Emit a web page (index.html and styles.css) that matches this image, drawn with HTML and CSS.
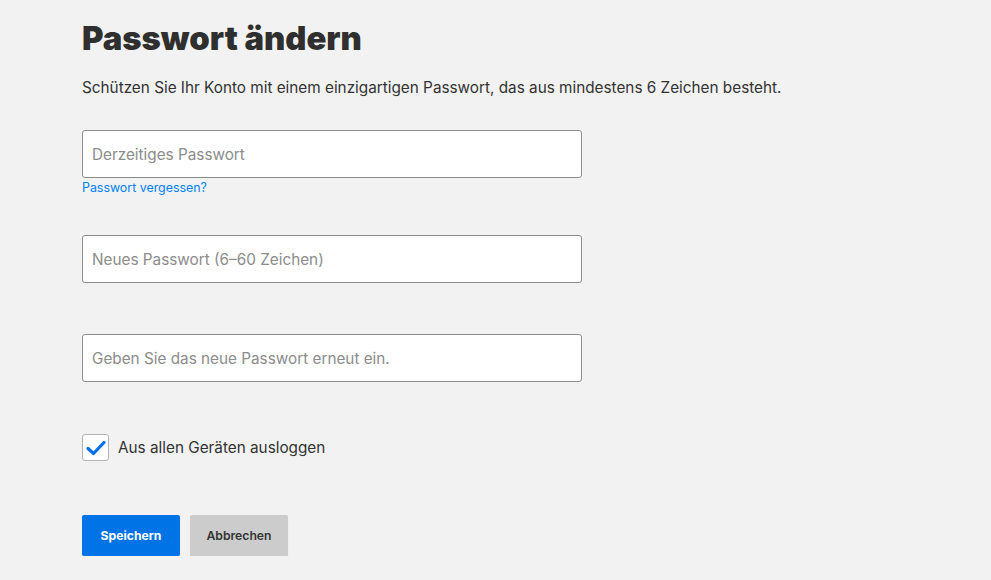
FILE: index.html
```html
<!DOCTYPE html>
<html lang="de">
<head>
<meta charset="utf-8">
<link rel="stylesheet" href="styles.css">
</head>
<body>
<main class="page">
  <h1 class="title">Passwort ändern</h1>
  <p class="lead">Schützen Sie Ihr Konto mit einem einzigartigen Passwort, das aus mindestens 6 Zeichen besteht.</p>
  <form class="form">
    <div class="field first">
      <input class="input" type="password" placeholder="Derzeitiges Passwort">
      <a class="forgot" href="#">Passwort vergessen?</a>
    </div>
    <div class="field second">
      <input class="input" type="password" placeholder="Neues Passwort (6–60 Zeichen)">
    </div>
    <div class="field third">
      <input class="input" type="password" placeholder="Geben Sie das neue Passwort erneut ein.">
    </div>
    <label class="check">
      <span class="box"><svg width="20" height="16" viewBox="0 0 20 16"><path d="M2 8.5 L7.5 13.5 L18 2.5" fill="none" stroke="#0071eb" stroke-width="3.2" stroke-linecap="round" stroke-linejoin="round"/></svg></span>
      <span class="check-label">Aus allen Geräten ausloggen</span>
    </label>
    <div class="actions">
      <button type="button" class="btn primary">Speichern</button>
      <button type="button" class="btn secondary">Abbrechen</button>
    </div>
  </form>
</main>
</body>
</html>
```

FILE: styles.css
```css
html, body {
  margin: 0;
  padding: 0;
  background: #f2f2f2;
}
body {
  font-family: Inter, "Noto Sans", "Liberation Sans", sans-serif;
  color: #333;
}
.page {
  padding: 18px 0 0 82px;
}
.title {
  margin: 0;
  font-size: 32.8px;
  line-height: 40px;
  font-weight: 900;
  color: #2f2f2f;
  letter-spacing: 0;
}
.lead {
  margin: 20px 0 0;
  font-size: 15.3px;
  line-height: 20px;
  color: #333;
}
.form {
  display: flex;
  flex-direction: column;
}
.field {
  display: flex;
  flex-direction: column;
  width: 500px;
}
.field.first { margin-top: 32px; }
.field.second { margin-top: 39px; }
.field.third { margin-top: 51px; }
.input {
  box-sizing: border-box;
  width: 500px;
  height: 48px;
  border: 1px solid #8c8c8c;
  border-radius: 3px;
  background: #fff;
  padding: 0 9px;
  font-family: inherit;
  font-size: 15.3px;
  color: #333;
  outline: none;
}
.input::placeholder {
  color: #8c8c8c;
}
.forgot {
  margin-top: 2px;
  font-size: 12.4px;
  line-height: 16px;
  color: #0080ff;
  text-decoration: none;
}
.check {
  display: flex;
  align-items: center;
  gap: 9px;
  margin-top: 52px;
}
.box {
  box-sizing: border-box;
  width: 27px;
  height: 27px;
  border: 1px solid #b3b3b3;
  border-radius: 3px;
  background: #fff;
  display: flex;
  align-items: center;
  justify-content: center;
}
.check-label {
  font-size: 15.3px;
  color: #333;
}
.actions {
  display: flex;
  gap: 10px;
  margin-top: 54px;
}
.btn {
  height: 41px;
  border: none;
  border-radius: 2px;
  font-family: inherit;
  font-size: 12.2px;
  font-weight: 700;
  padding: 0;
  box-shadow: 0 1px 1px rgba(0,0,0,0.15);
}
.primary {
  width: 98px;
  background: #0073e6;
  color: #fff;
}
.secondary {
  width: 98px;
  background: #cccccc;
  color: #333;
  font-weight: 600;
}
```
